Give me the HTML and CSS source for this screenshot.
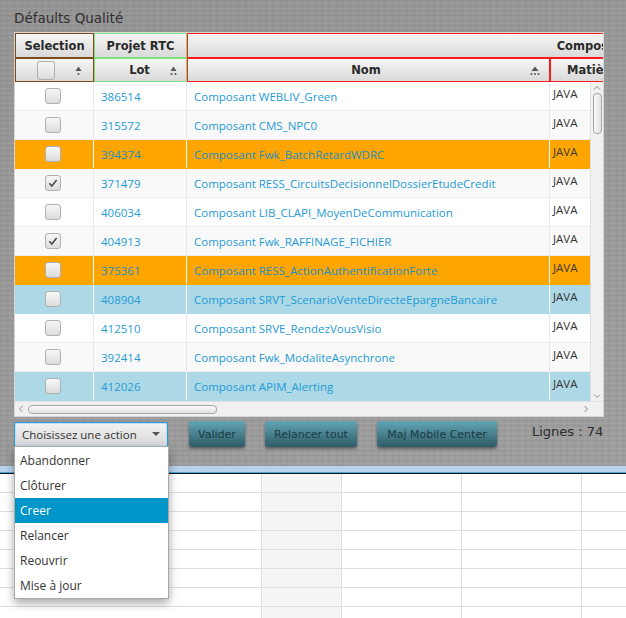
FILE: index.html
```html
<!DOCTYPE html>
<html lang="fr">
<head>
<meta charset="utf-8">
<title>Défaults Qualité</title>
<link rel="stylesheet" href="styles.css">
</head>
<body>
<div class="panel">
  <div class="title">Défaults Qualité</div>
  <div class="table">
    <div class="head">
      <div class="hrow hrow1">
        <div class="hc sel brown">Selection</div>
        <div class="hc lot green">Projet RTC</div>
        <div class="hc group red">Composant</div>
      </div>
      <div class="hrow hrow2">
        <div class="hc sel brown sel-h">
          <span class="cb cb-h"></span>
          <svg class="sort" width="7" height="10" viewBox="0 0 7 10"><path d="M3.5 0.5 L6.5 5 L0.5 5Z" fill="#555"/><circle cx="3.5" cy="8" r="1" fill="#555"/></svg>
        </div>
        <div class="hc lot green sortable">
          <span class="hl">Lot</span>
          <svg class="sort" width="7" height="10" viewBox="0 0 7 10"><path d="M3.5 0.5 L6.5 5 L0.5 5Z" fill="#555"/><circle cx="1.5" cy="8" r="1" fill="#555"/><circle cx="5.5" cy="8" r="1" fill="#555"/></svg>
        </div>
        <div class="hc nom red sortable">
          <span class="hl">Nom</span>
          <svg class="sort" width="10" height="10" viewBox="0 0 10 10"><path d="M5 0.5 L8.5 5 L1.5 5Z" fill="#555"/><circle cx="1.5" cy="8" r="1" fill="#555"/><circle cx="5" cy="8" r="1" fill="#555"/><circle cx="8.5" cy="8" r="1" fill="#555"/></svg>
        </div>
        <div class="hc mat red">Matière</div>
      </div>
    </div>
    <div class="body">
      <div class="rows">
        <div class="row"><div class="c sel"><span class="cb"></span></div><div class="c lot">386514</div><div class="c nom">Composant WEBLIV_Green</div><div class="c mat">JAVA</div></div>
        <div class="row alt"><div class="c sel"><span class="cb"></span></div><div class="c lot">315572</div><div class="c nom">Composant CMS_NPC0</div><div class="c mat">JAVA</div></div>
        <div class="row orange"><div class="c sel"><span class="cb"></span></div><div class="c lot">394374</div><div class="c nom">Composant Fwk_BatchRetardWDRC</div><div class="c mat">JAVA</div></div>
        <div class="row alt"><div class="c sel"><span class="cb"><svg viewBox="0 0 15 15" width="15" height="15"><path d="M3.5 7.2 L6.3 10.3 L11.4 3.8" stroke="#4a4a4a" stroke-width="1.7" fill="none"/></svg></span></div><div class="c lot">371479</div><div class="c nom">Composant RESS_CircuitsDecisionnelDossierEtudeCredit</div><div class="c mat">JAVA</div></div>
        <div class="row"><div class="c sel"><span class="cb"></span></div><div class="c lot">406034</div><div class="c nom">Composant LIB_CLAPI_MoyenDeCommunication</div><div class="c mat">JAVA</div></div>
        <div class="row alt"><div class="c sel"><span class="cb"><svg viewBox="0 0 15 15" width="15" height="15"><path d="M3.5 7.2 L6.3 10.3 L11.4 3.8" stroke="#4a4a4a" stroke-width="1.7" fill="none"/></svg></span></div><div class="c lot">404913</div><div class="c nom">Composant Fwk_RAFFINAGE_FICHIER</div><div class="c mat">JAVA</div></div>
        <div class="row orange"><div class="c sel"><span class="cb"></span></div><div class="c lot">375361</div><div class="c nom">Composant RESS_ActionAuthentificationForte</div><div class="c mat">JAVA</div></div>
        <div class="row blue"><div class="c sel"><span class="cb"></span></div><div class="c lot">408904</div><div class="c nom">Composant SRVT_ScenarioVenteDirecteEpargneBancaire</div><div class="c mat">JAVA</div></div>
        <div class="row"><div class="c sel"><span class="cb"></span></div><div class="c lot">412510</div><div class="c nom">Composant SRVE_RendezVousVisio</div><div class="c mat">JAVA</div></div>
        <div class="row alt"><div class="c sel"><span class="cb"></span></div><div class="c lot">392414</div><div class="c nom">Composant Fwk_ModaliteAsynchrone</div><div class="c mat">JAVA</div></div>
        <div class="row blue"><div class="c sel"><span class="cb"></span></div><div class="c lot">412026</div><div class="c nom">Composant APIM_Alerting</div><div class="c mat">JAVA</div></div>
      </div>
      <div class="vscroll">
        <svg class="chev" width="8" height="5" viewBox="0 0 8 5"><path d="M1 4.5 L4 1.5 L7 4.5" stroke="#8a8a8a" stroke-width="1" fill="none"/></svg>
        <div class="vthumb"></div>
        <div class="vspace"></div>
        <svg class="chev" width="8" height="5" viewBox="0 0 8 5"><path d="M1 0.5 L4 3.5 L7 0.5" stroke="#8a8a8a" stroke-width="1" fill="none"/></svg>
      </div>
    </div>
    <div class="hscroll">
      <svg class="chev" width="5" height="8" viewBox="0 0 5 8"><path d="M4.5 1 L1.5 4 L4.5 7" stroke="#8a8a8a" stroke-width="1" fill="none"/></svg>
      <div class="hthumb"></div>
      <div class="hspace"></div>
      <svg class="chev" width="5" height="8" viewBox="0 0 5 8"><path d="M0.5 1 L3.5 4 L0.5 7" stroke="#8a8a8a" stroke-width="1" fill="none"/></svg>
    </div>
  </div>
  <div class="controls">
    <div class="combo">
      <span>Choisissez une action</span>
      <svg width="8" height="4" viewBox="0 0 8 4"><path d="M0 0 L8 0 L4 4Z" fill="#555"/></svg>
    </div>
    <div class="btn btn-valider">Valider</div>
    <div class="btn btn-relancer">Relancer tout</div>
    <div class="btn btn-maj">Maj Mobile Center</div>
    <div class="count">Lignes : 74</div>
  </div>
</div>
<div class="strip"></div>
<div class="sheet">
  <div class="scol"></div>
  <div class="scol shade"></div>
  <div class="scol"></div>
  <div class="scol"></div>
  <div class="scol last"></div>
</div>
<div class="popup">
  <div class="item">Abandonner</div>
  <div class="item">Clôturer</div>
  <div class="item selected">Creer</div>
  <div class="item">Relancer</div>
  <div class="item">Reouvrir</div>
  <div class="item">Mise à jour</div>
</div>
</body>
</html>
```

FILE: styles.css
```css
html, body {
  margin: 0;
  padding: 0;
}
body {
  width: 626px;
  height: 618px;
  overflow: hidden;
  position: relative;
  background: #fff;
  font-family: "Open Sans", "Noto Sans", sans-serif;
}
.panel {
  height: 466px;
  box-sizing: border-box;
  padding: 9px 0 0 14px;
  background-color: #9a9a9a;
  background-image:
    repeating-linear-gradient(0deg, rgba(0,0,0,0.04) 0 1px, transparent 1px 2px, rgba(255,255,255,0.05) 2px 3px, transparent 3px 5px),
    repeating-linear-gradient(90deg, rgba(0,0,0,0.03) 0 1px, transparent 1px 3px, rgba(255,255,255,0.03) 3px 4px, transparent 4px 7px),
    linear-gradient(160deg, rgba(0,0,0,0.04), rgba(255,255,255,0.04));
}
.title {
  height: 18px;
  margin-bottom: 5px;
  font-family: "DejaVu Sans", sans-serif;
  font-size: 13.5px;
  line-height: 18px;
  color: #2f2f2f;
}
.table {
  width: 590px;
  height: 385px;
  box-sizing: border-box;
  border: 1px solid #d6d6d6;
  background: #f2f2f2;
  display: flex;
  flex-direction: column;
}
.head {
  overflow: hidden;
  width: 588px;
}
.hrow {
  display: flex;
  width: 1200px;
}
.hrow1 { height: 25px; }
.hrow2 { height: 24px; }
.hc {
  box-sizing: border-box;
  flex: none;
  border: 1px solid;
  background: linear-gradient(#f6f6f6, #d9d9d9);
  font-family: "DejaVu Sans", sans-serif;
  font-weight: bold;
  font-size: 11.5px;
  color: #2a2a2a;
  display: flex;
  align-items: center;
  justify-content: center;
}
.brown { border-color: #7b4a17; }
.green { border-color: #7fe07f; }
.red { border-color: #ff1a1a; }
.hc.sel { width: 79px; }
.hc.lot { width: 93px; }
.hc.group { width: 812px; }
.hc.nom { width: 363px; }
.hc.mat { width: 84px; }
.sel-h {
  justify-content: flex-start;
  padding-left: 21px;
  padding-right: 11px;
}
.sel-h .sort { margin-left: auto; }
.sortable { padding-right: 9px; }
.sortable .hl {
  flex: 1;
  text-align: center;
  padding-left: 14px;
}
.sort { flex: none; margin-top: 1px; }

.cb {
  box-sizing: border-box;
  width: 16px;
  height: 16px;
  border: 1px solid #b0b0b0;
  border-radius: 3px;
  background: linear-gradient(#f7f7f7, #dcdcdc);
  display: flex;
  align-items: center;
  justify-content: center;
}
.cb svg { display: block; }
.cb-h {
  width: 18px;
  height: 19px;
}

.body {
  display: flex;
  height: 319px;
}
.rows {
  width: 575px;
  overflow: hidden;
  background: #fff;
}
.row {
  display: flex;
  width: 700px;
  height: 29px;
  box-sizing: border-box;
  border-bottom: 1px solid #ededed;
  background: #fff;
}
.row.alt { background: #f9f9f9; }
.row.orange { background: #ffa500; border-bottom-color: #ffa500; }
.row.blue { background: #add8e6; border-bottom-color: #add8e6; }
.c {
  box-sizing: border-box;
  flex: none;
  border-right: 1px solid #e8e8e8;
  display: flex;
  align-items: center;
  font-size: 11.5px;
  color: #1f9bd6;
  white-space: nowrap;
}
.row.orange .c, .row.blue .c { border-right-color: #ffffff; }
.c.sel { width: 79px; justify-content: center; padding-right: 3px; }
.c.lot { width: 93px; padding-left: 7px; }
.c.nom { width: 363px; padding-left: 7px; }
.c.mat {
  width: 84px;
  align-items: flex-start;
  padding-top: 4px;
  padding-left: 3px;
  color: #333;
}
.row.orange .c.lot, .row.orange .c.nom { color: #1a8fc4; }
.row.orange .c.mat { color: #3a3a3a; }

.vscroll {
  width: 13px;
  box-sizing: border-box;
  background: #f0f0f0;
  border-left: 1px solid #e2e2e2;
  display: flex;
  flex-direction: column;
  align-items: center;
  padding: 3px 0 2px;
}
.vthumb {
  width: 9px;
  height: 41px;
  box-sizing: border-box;
  margin-top: 3px;
  border: 1px solid #a6a6a6;
  border-radius: 4px;
  background: linear-gradient(90deg, #fafafa, #e2e2e2);
}
.vspace { flex: 1; }
.chev { display: block; flex: none; }
.hscroll {
  height: 15px;
  box-sizing: border-box;
  background: #f0f0f0;
  border-top: 1px solid #e2e2e2;
  display: flex;
  align-items: center;
  padding: 0 14px 0 3px;
}
.hthumb {
  width: 189px;
  height: 9px;
  box-sizing: border-box;
  margin-left: 5px;
  border: 1px solid #a6a6a6;
  border-radius: 4px;
  background: linear-gradient(#fafafa, #e2e2e2);
}
.hspace { flex: 1; }

.controls {
  display: flex;
  align-items: center;
  margin-top: 4px;
  height: 26px;
}
.combo {
  box-sizing: border-box;
  width: 154px;
  height: 25px;
  border: 1px solid #2f95d4;
  border-radius: 2px;
  box-shadow: inset 0 0 0 1px #bfe0f5;
  background: linear-gradient(#f3f3f3, #d8d8d8);
  display: flex;
  align-items: center;
  justify-content: space-between;
  padding: 0 7px 0 7px;
  font-size: 11.5px;
  color: #333;
}
.btn {
  box-sizing: border-box;
  height: 26px;
  border-radius: 3px;
  background: linear-gradient(#63a6b6, #2e5b65);
  box-shadow: 0 2px 3px rgba(0,0,0,0.4);
  display: flex;
  align-items: center;
  justify-content: center;
  font-family: "DejaVu Sans", sans-serif;
  font-size: 11px;
  color: #1c3a42;
}
.btn-valider { width: 56px; margin-left: 21px; }
.btn-relancer { width: 92px; margin-left: 20px; }
.btn-maj { width: 120px; margin-left: 20px; }
.count {
  margin-left: 35px;
  margin-top: -5px;
  font-family: "DejaVu Sans", sans-serif;
  font-size: 13px;
  color: #2b2b2b;
  white-space: nowrap;
}

.strip {
  height: 6px;
  background: #b8d3eb;
  border-bottom: 1px solid #4aa8dc;
}
.sheet {
  border-top: 1px solid #111;
  height: 144px;
  display: grid;
  grid-template-columns: 262px 80px 120px 120px 1fr;
}
.scol {
  border-right: 1px solid #dedede;
  background-image: repeating-linear-gradient(to bottom, transparent 0 18px, #dedede 18px 19px);
  background-color: #fff;
}
.scol.shade { background-color: #f5f5f5; }
.scol.last { border-right: none; }

.popup {
  position: absolute;
  left: 14px;
  top: 446px;
  width: 155px;
  box-sizing: border-box;
  border: 1px solid #a9a9a9;
  background: #fff;
  box-shadow: 0 4px 9px rgba(0,0,0,0.35);
  padding: 1px 0 0;
}
.item {
  height: 25px;
  line-height: 25px;
  padding-left: 5px;
  font-size: 12px;
  color: #333;
}
.item.selected {
  background: #0096c9;
  color: #fff;
}
```
